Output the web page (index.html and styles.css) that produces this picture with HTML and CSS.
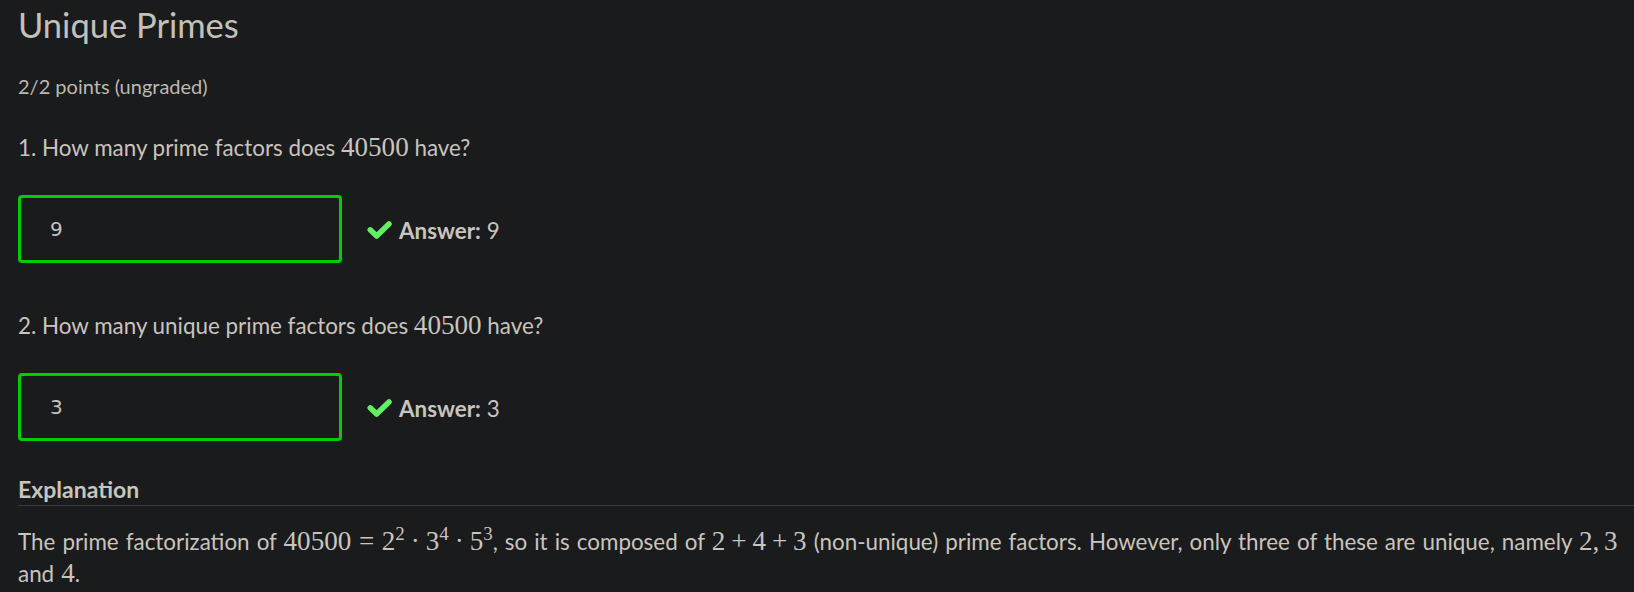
FILE: index.html
```html
<!DOCTYPE html>
<html lang="en">
<head>
<meta charset="utf-8">
<title>Unique Primes</title>
<link rel="stylesheet" href="styles.css">
</head>
<body>
<main class="problem">
  <h2 class="problem-title">Unique Primes</h2>
  <div class="points">2/2 points (ungraded)</div>

  <section class="question">
    <p class="prompt">1. How many prime factors does <span class="math">40500</span> have?</p>
    <div class="answer-row">
      <div class="answer-input">9</div>
      <div class="status">
        <svg class="check" width="26" height="20" viewBox="0 0 26 20" aria-hidden="true"><polyline points="3.2,9.8 9.6,16 22,4"/></svg>
        <span class="status-label">Answer:</span> 9
      </div>
    </div>
  </section>

  <section class="question">
    <p class="prompt">2. How many unique prime factors does <span class="math">40500</span> have?</p>
    <div class="answer-row">
      <div class="answer-input">3</div>
      <div class="status">
        <svg class="check" width="26" height="20" viewBox="0 0 26 20" aria-hidden="true"><polyline points="3.2,9.8 9.6,16 22,4"/></svg>
        <span class="status-label">Answer:</span> 3
      </div>
    </div>
  </section>

  <section class="explanation">
    <h3 class="explanation-title">Explanation</h3>
    <p class="explanation-text">The prime factorization of <span class="math">40500<span class="rel">=</span>2<sup>2</sup><span class="bin">·</span>3<sup>4</sup><span class="bin">·</span>5<sup>3</sup></span>, so it is composed of <span class="math">2<span class="bin">+</span>4<span class="bin">+</span>3</span> (non-unique) prime factors. However, only three of these are unique, namely <span class="math">2,<span class="thin"></span>3</span> and <span class="math">4</span>.</p>
  </section>
</main>
</body>
</html>
```
FILE: styles.css
```css
html, body {
  margin: 0;
  padding: 0;
  background: #1a1b1d;
}

body {
  color: #c9c4bd;
  font-family: Lato, "Open Sans", sans-serif;
  font-size: 22.4px;
}

.problem {
  padding: 5px 0 0 18px;
}

.problem-title {
  margin: 0;
  font-size: 34.5px;
  font-weight: 400;
  line-height: 40px;
  color: #c4c0ba;
}

.points {
  margin-top: 29px;
  font-size: 20px;
  line-height: 24px;
  color: #bdb8b1;
}

.question {
  margin-top: 34px;
}

.question + .question {
  margin-top: 47px;
}

.prompt {
  margin: 0;
  line-height: 32px;
}

.math {
  font-family: "Liberation Serif", "DejaVu Serif", serif;
  font-size: 1.21em;
  line-height: 1;
}

.math sup {
  font-size: 0.7em;
  line-height: 0;
  vertical-align: 0.52em;
}

.rel {
  margin: 0 0.28em;
}

.bin {
  margin: 0 0.22em;
}

.thin {
  display: inline-block;
  width: 0.17em;
}

.answer-row {
  display: flex;
  align-items: center;
  gap: 25px;
  margin-top: 31px;
}

.answer-input {
  box-sizing: border-box;
  width: 324px;
  height: 68px;
  padding: 0 29px;
  display: flex;
  align-items: center;
  border: 3px solid #00cc00;
  border-radius: 4px;
  font-family: "DejaVu Sans", sans-serif;
  font-size: 20px;
  color: #c9c4bd;
}

.status {
  display: flex;
  align-items: center;
  line-height: 32px;
  padding-top: 4px;
}

.check {
  margin-right: 6px;
  margin-top: -2px;
}

.check polyline {
  fill: none;
  stroke: #62f062;
  stroke-width: 5.5;
  stroke-linecap: round;
  stroke-linejoin: round;
}

.status-label {
  font-weight: 700;
  margin-right: 6px;
}

.explanation {
  margin-top: 33px;
}

.explanation-title {
  margin: 0;
  font-size: 23px;
  font-weight: 700;
  line-height: 30px;
  padding-bottom: 1px;
  border-bottom: 1px solid #35383b;
}

.explanation-text {
  margin: 20px 0 0;
  line-height: 32px;
  word-spacing: 1.3px;
}
```
